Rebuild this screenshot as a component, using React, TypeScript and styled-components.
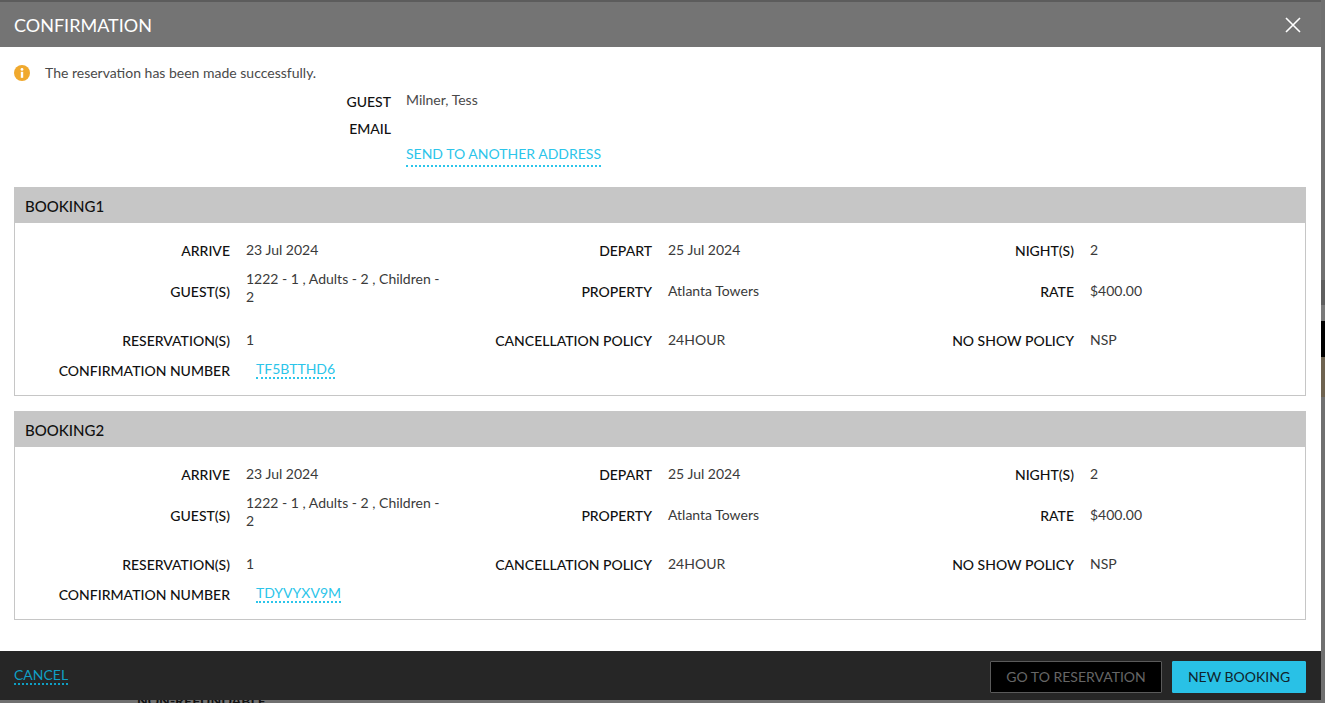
import React from "react";
import styled, { createGlobalStyle } from "styled-components";

const GlobalStyle = createGlobalStyle`
  html, body {
    margin: 0;
    padding: 0;
    height: 100%;
    overflow: hidden;
  }
  body {
    font-family: Lato, "Noto Sans", sans-serif;
    background: #6f6f6f;
  }
`;

const Page = styled.div`
  width: 1325px;
  height: 703px;
  position: relative;
  overflow: hidden;
  background: #707070;
`;

const BackdropStrip = styled.div`
  position: absolute;
  right: 0;
  top: 280px;
  width: 4px;
  height: 117px;
  background: linear-gradient(
    #5f5f5f 0,
    #5f5f5f 25px,
    #7a7a7a 25px,
    #7a7a7a 41px,
    #000 41px,
    #000 77px,
    #6e6350 77px,
    #6e6350 100%
  );
`;

const BackdropText = styled.div`
  position: absolute;
  left: 137px;
  top: 693px;
  font-size: 14px;
  line-height: 16px;
  font-weight: 700;
  color: #111;
`;

const Modal = styled.div`
  position: relative;
  z-index: 1;
  width: 1321px;
  height: 700px;
  display: flex;
  flex-direction: column;
  background: #fff;
`;

const Header = styled.div`
  height: 47px;
  box-sizing: border-box;
  padding: 0 20px 0 14px;
  display: flex;
  align-items: center;
  justify-content: space-between;
  background: #747474;
  border-top: 2px solid #5c5c5c;
  color: #fff;
  font-size: 18px;
`;

const CloseButton = styled.button`
  border: 0;
  background: none;
  padding: 0;
  width: 16px;
  height: 16px;
  display: flex;
  color: #fff;
`;

const Body = styled.div`
  flex: 1;
  padding: 0 15px 0 14px;
`;

const Notice = styled.div`
  height: 19px;
  margin-top: 16px;
  display: flex;
  align-items: center;
  gap: 15px;
  font-size: 14px;
  color: #4a4a4a;
`;

const GuestGrid = styled.div`
  display: grid;
  grid-template-columns: 377px 1fr;
  grid-template-rows: 27px 27px 22px;
  column-gap: 15px;
  margin-top: 9px;
  font-size: 14px;
`;

const GuestLabel = styled.div`
  text-align: right;
  font-weight: 500;
  padding-top: 2px;
  color: #111;
`;

const GuestValue = styled.div`
  color: #4a4a4a;
`;

const LinkText = styled.a<{ $pad?: number }>`
  display: inline-block;
  color: #2cc5ea;
  font-size: 14px;
  line-height: 17px;
  padding-bottom: ${(p) => p.$pad ?? 0}px;
  border-bottom: 2px dotted #2cc5ea;
`;

const Card = styled.section<{ $top: number }>`
  margin-top: ${(p) => p.$top}px;
  border: 1px solid #c6c6c6;
  border-top: 0;
  height: 209px;
  box-sizing: border-box;
`;

const CardTitle = styled.div`
  height: 36px;
  box-sizing: border-box;
  margin: 0 -1px;
  padding: 2px 11px 0;
  display: flex;
  align-items: center;
  background: #c6c6c6;
  color: #111;
  font-size: 15px;
  font-weight: 500;
`;

const Fields = styled.div`
  display: grid;
  grid-template-columns: repeat(3, 422px);
  grid-template-rows: 29px 61px 30px 30px;
  padding-top: 17px;
  font-size: 14px;
`;

const Field = styled.div`
  display: grid;
  grid-template-columns: 215px 200px;
  column-gap: 16px;
  align-items: start;
`;

const FieldLabel = styled.div<{ $offset?: boolean }>`
  text-align: right;
  font-weight: 500;
  color: #111;
  padding-top: ${(p) => (p.$offset ? 14 : 2)}px;
`;

const FieldValue = styled.div<{ $offset?: boolean }>`
  color: #3a3a3a;
  line-height: 18px;
  padding-top: ${(p) => (p.$offset ? 13 : 1)}px;
`;

const NumberValue = styled.div`
  padding: 0 0 0 10px;
`;

const Footer = styled.div`
  height: 49px;
  box-sizing: border-box;
  padding: 10px 15px 0 14px;
  display: flex;
  align-items: flex-start;
  background: #262626;
`;

const CancelLink = styled.a`
  color: #0f9fc4;
  font-size: 14px;
  line-height: 17px;
  margin-top: 5px;
  border-bottom: 2px dotted #0f9fc4;
`;

const Actions = styled.div`
  margin-left: auto;
  display: flex;
  gap: 10px;
`;

const ActionButton = styled.button<{ $primary?: boolean }>`
  height: 32px;
  padding: 0 0 2px;
  width: ${(p) => (p.$primary ? 134 : 172)}px;
  box-sizing: border-box;
  font-family: inherit;
  font-size: 14px;
  border-radius: 1px;
  border: 1px solid ${(p) => (p.$primary ? "#29c1e6" : "#5a5a5a")};
  background: ${(p) => (p.$primary ? "#29c1e6" : "#000")};
  color: ${(p) => (p.$primary ? "#10242c" : "#666")};
`;

type Booking = { title: string; number: string };

const bookings: Booking[] = [
  { title: "BOOKING1", number: "TF5BTTHD6" },
  { title: "BOOKING2", number: "TDYVYXV9M" },
];

const InfoIcon = () => (
  <svg width="16" height="16" viewBox="0 0 16 16" aria-hidden="true">
    <circle cx="8" cy="8" r="8" fill="#f0a92e" />
    <circle cx="8" cy="4.4" r="1.4" fill="#fff" />
    <rect x="6.8" y="6.8" width="2.4" height="6" fill="#fff" />
  </svg>
);

const CloseIcon = () => (
  <svg width="16" height="16" viewBox="0 0 16 16" fill="none" stroke="currentColor" strokeWidth="1.6" aria-hidden="true">
    <path d="M1 1 L15 15 M15 1 L1 15" />
  </svg>
);

const App: React.FunctionComponent<{}> = () => {
  return (
    <Page>
      <GlobalStyle />
      <BackdropStrip />
      <BackdropText>NON-REFUNDABLE</BackdropText>
      <Modal>
        <Header>
          CONFIRMATION
          <CloseButton aria-label="Close">
            <CloseIcon />
          </CloseButton>
        </Header>
        <Body>
          <Notice>
            <InfoIcon />
            The reservation has been made successfully.
          </Notice>
          <GuestGrid>
            <GuestLabel>GUEST</GuestLabel>
            <GuestValue>Milner, Tess</GuestValue>
            <GuestLabel>EMAIL</GuestLabel>
            <GuestValue />
            <div />
            <GuestValue>
              <LinkText $pad={3}>SEND TO ANOTHER ADDRESS</LinkText>
            </GuestValue>
          </GuestGrid>
          {bookings.map((b, i) => (
            <Card key={b.title} $top={i === 0 ? 20 : 15}>
              <CardTitle>{b.title}</CardTitle>
              <Fields>
                <Field>
                  <FieldLabel>ARRIVE</FieldLabel>
                  <FieldValue>23 Jul 2024</FieldValue>
                </Field>
                <Field>
                  <FieldLabel>DEPART</FieldLabel>
                  <FieldValue>25 Jul 2024</FieldValue>
                </Field>
                <Field>
                  <FieldLabel>NIGHT(S)</FieldLabel>
                  <FieldValue>2</FieldValue>
                </Field>
                <Field>
                  <FieldLabel $offset>GUEST(S)</FieldLabel>
                  <FieldValue>1222 - 1 , Adults - 2 , Children - 2</FieldValue>
                </Field>
                <Field>
                  <FieldLabel $offset>PROPERTY</FieldLabel>
                  <FieldValue $offset>Atlanta Towers</FieldValue>
                </Field>
                <Field>
                  <FieldLabel $offset>RATE</FieldLabel>
                  <FieldValue $offset>$400.00</FieldValue>
                </Field>
                <Field>
                  <FieldLabel>RESERVATION(S)</FieldLabel>
                  <FieldValue>1</FieldValue>
                </Field>
                <Field>
                  <FieldLabel>CANCELLATION POLICY</FieldLabel>
                  <FieldValue>24HOUR</FieldValue>
                </Field>
                <Field>
                  <FieldLabel>NO SHOW POLICY</FieldLabel>
                  <FieldValue>NSP</FieldValue>
                </Field>
                <Field>
                  <FieldLabel>CONFIRMATION NUMBER</FieldLabel>
                  <NumberValue>
                    <LinkText>{b.number}</LinkText>
                  </NumberValue>
                </Field>
              </Fields>
            </Card>
          ))}
        </Body>
        <Footer>
          <CancelLink>CANCEL</CancelLink>
          <Actions>
            <ActionButton>GO TO RESERVATION</ActionButton>
            <ActionButton $primary>NEW BOOKING</ActionButton>
          </Actions>
        </Footer>
      </Modal>
    </Page>
  );
};

export default App;
